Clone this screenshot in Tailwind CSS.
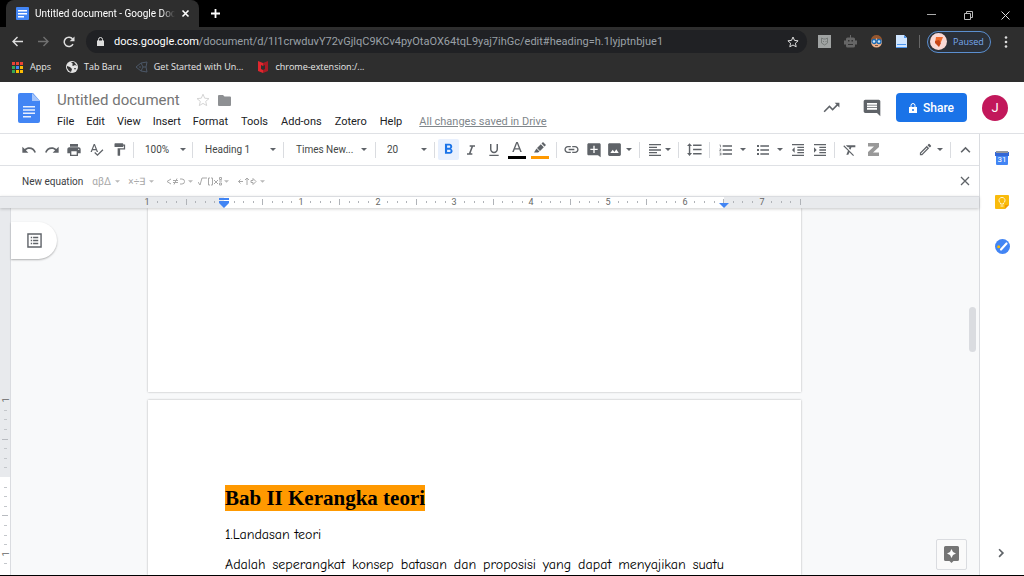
<!DOCTYPE html>
<html lang="en">
<head>
    <meta charset="UTF-8">
    <title>Untitled document - Google Docs</title>
    <meta name="viewport" content="width=device-width, initial-scale=1.0">
    <script src="https://cdn.jsdelivr.net/npm/@tailwindcss/browser@4"></script>
</head>
<body class="h-screen overflow-hidden flex flex-col bg-white text-[#3c4043] font-[Roboto,sans-serif] border-b border-black">

    <!-- Shared icons -->
    <svg class="hidden">
        <symbol id="caret" viewBox="0 0 8 4"><path d="M0 0h8L4 4z"/></symbol>
        <symbol id="docs" viewBox="0 0 22 30">
            <path fill="#4285f4" d="M2 0h13l7 8v20a2 2 0 0 1-2 2H2a2 2 0 0 1-2-2V2a2 2 0 0 1 2-2z"/>
            <path fill="#a6c5fa" d="M14 0l8 8h-8z"/>
            <path fill="#e8f0fe" d="M5 13h12v1.500H5zm0 3.300h12v1.500H5zm0 3.300h12v1.500H5zm0 3.300h8v1.500H5z"/>
        </symbol>
    </svg>

    <!-- Tab strip -->
    <header class="bg-black h-[27px] shrink-0 flex items-end text-white">
        <div class="w-[193px] h-[27px] ml-[6px] bg-[#2e2e2e] rounded-t-lg flex items-center pl-[10px] pr-[9px]">
            <svg class="size-[13px] shrink-0" viewBox="0 0 13 13"><path fill="#4285f4" d="M1 0h11a1 1 0 0 1 1 1v11a1 1 0 0 1-1 1H1a1 1 0 0 1-1-1V1a1 1 0 0 1 1-1z"/><path fill="#fff" d="M2 3h9v1.500H2zm0 3h9v1.500H2zm0 3h6v1.500H2z"/></svg>
            <div class="w-[140px] ml-[6px] overflow-hidden whitespace-nowrap text-[10px] mask-r-from-90%">Untitled document - Google Doc</div>
            <button class="ml-auto" aria-label="Close tab"><svg class="size-[9px] stroke-white" viewBox="0 0 9 9" stroke-width="1.600"><path d="M1.500 1.500l6 6m0-6l-6 6"/></svg></button>
        </div>
        <button class="ml-[11px] h-[27px]" aria-label="New tab"><svg class="size-[11px] stroke-white" viewBox="0 0 11 11" stroke-width="1.800"><path d="M5.500 1v9M1 5.500h9"/></svg></button>
        <div class="ml-auto h-[23px] flex items-center gap-7 pr-[14px]">
            <button aria-label="Minimize"><svg class="size-[9px] stroke-[#aaa]" viewBox="0 0 9 9"><path d="M0 3.500h9"/></svg></button>
            <button aria-label="Restore"><svg class="size-[9px] stroke-[#bbb]" viewBox="0 0 9 9" fill="none"><path d="M.5 2.500h6v6h-6zM2.500 2.500v-2h6v6h-2"/></svg></button>
            <button aria-label="Close"><svg class="size-[9px] stroke-[#ddd]" viewBox="0 0 9 9"><path d="M.5.5l8 8m0-8l-8 8"/></svg></button>
        </div>
    </header>

    <!-- Address bar -->
    <div class="bg-[#2e2e2e] h-[29px] shrink-0 flex items-center pl-3">
        <button aria-label="Back"><svg class="size-[11px] stroke-[#dedede]" viewBox="0 0 11 11" fill="none" stroke-width="1.400"><path d="M11 5.500H1M5.500 1L1 5.500 5.500 10"/></svg></button>
        <button class="ml-[15px]" aria-label="Forward"><svg class="size-[11px] stroke-[#707070]" viewBox="0 0 11 11" fill="none" stroke-width="1.400"><path d="M0 5.500h10M5.500 1L10 5.500 5.500 10"/></svg></button>
        <button class="ml-[14px]" aria-label="Reload"><svg class="size-[12px] stroke-[#dedede] fill-none" viewBox="0 0 12 12" stroke-width="1.500"><path d="M10 8.200A4.700 4.700 0 1 1 9.600 3"/><path class="fill-[#dedede]" stroke="none" d="M11.500.5v4.800H6.700z"/></svg></button>
        <div class="ml-[11px] flex-1 h-[23px] rounded-full bg-[#202124] flex items-center pl-[11px] pr-[8px]">
            <svg class="w-[7px] h-[9px] shrink-0" viewBox="0 0 7 9"><path fill="#ddd" d="M0 3.500h7V9H0z"/><path d="M1.500 4V2.500a2 2 0 0 1 4 0V4" fill="none" stroke="#ddd"/></svg>
            <div class="ml-[10px] text-[11px] leading-[23px] whitespace-nowrap text-[#9aa0a6]"><span class="text-white">docs.google.com</span>/document/d/1I1crwduvY72vGjlqC9KCv4pyOtaOX64tqL9yaj7ihGc/edit#heading=h.1lyjptnbjue1</div>
            <button class="ml-auto" aria-label="Bookmark this page"><svg class="size-[12px] fill-none stroke-[#ddd]" viewBox="0 0 12 12"><path d="M6 1l1.500 3.400 3.600.4-2.700 2.400.8 3.600L6 9l-3.200 1.800.8-3.600L.9 4.800l3.600-.4z"/></svg></button>
        </div>
        <div class="flex items-center gap-[13px] ml-[11px]">
            <svg class="size-[13px]" viewBox="0 0 13 13"><path fill="#a0a3a2" d="M0 0h13v13H0z"/><path fill="none" stroke="#777b79" d="M3.500 3v5l3 2 3-2V3l-2 1h-2zM5 6.500h1M7.500 6.500h1"/></svg>
            <svg class="size-[13px]" viewBox="0 0 13 13"><path fill="#666" d="M6 0h1v2.500h2.500A1.500 1.500 0 0 1 11 4v1.500h2v4h-2V11a1.500 1.500 0 0 1-1.500 1.500h-6A1.500 1.500 0 0 1 2 11V9.500H0v-4h2V4a1.500 1.500 0 0 1 1.500-1.500H6z"/><path fill="#333" d="M4 5h1.500v1.500H4zm3.500 0H9v1.500H7.500zM4 9h5v1H4z"/></svg>
            <svg class="size-[13px]" viewBox="0 0 13 13"><circle cx="6.500" cy="7" r="5.500" fill="#efb28b"/><path fill="#96572f" d="M1 5a5.500 5 0 0 1 11 0H8L6.500 3 5 5z"/><g fill="#cce6f8" stroke="#1769b5" stroke-width="1.300"><circle cx="4" cy="6.500" r="2"/><circle cx="9" cy="6.500" r="2"/></g><path stroke="#754" d="M5 10.500h3"/></svg>
            <svg class="w-[11px] h-[13px]" viewBox="0 0 11 13"><path fill="#cfe5ff" d="M0 0h8l3 3v10H0z"/><path fill="#4a94ee" d="M8 0l3 3H8zM1 9h9v1H1zM0 12h11v1H0z"/></svg>
        </div>
        <div class="w-px h-[13px] bg-[#666] ml-[12px]"></div>
        <button class="ml-[7px] h-[22px] w-[64px] rounded-full border border-[#5b8fd0] bg-[#2b3038] flex items-center pl-[2px] text-[9px] text-[#78a9ee] font-['Open_Sans',sans-serif]">
            <svg class="size-[17px]" viewBox="0 0 17 17"><circle cx="8.500" cy="8.500" r="8.500" fill="#f9d8d5"/><path fill="#ef6a2d" d="M6 4h7l-2 5-6 1z"/><path fill="#c64315" d="M5 8l4-1 2 3-2 4-4-4z"/></svg>
            <span class="ml-[6px]">Paused</span>
        </button>
        <button class="ml-[13px] mr-[16px]" aria-label="Menu"><svg class="w-[4px] h-[12px] fill-[#ddd]" viewBox="0 0 4 12"><circle cx="2" cy="1.500" r="1.300"/><circle cx="2" cy="6" r="1.300"/><circle cx="2" cy="10.500" r="1.300"/></svg></button>
    </div>

    <!-- Bookmarks -->
    <nav class="bg-[#2e2e2e] h-[26px] shrink-0 flex items-center pl-3 pb-[4px] text-[9px] text-[#e8e8e8] whitespace-nowrap font-['Open_Sans',sans-serif]">
        <a href="#" class="flex items-center gap-[7px]">
            <svg class="size-[11px]" viewBox="0 0 11 11"><path fill="#ea4335" d="M0 0h3v3H0zm4 0h3v3H4zm4 0h3v3H8z"/><path fill="#34a853" d="M0 4h3v3H0zm0 4h3v3H0z"/><path fill="#4285f4" d="M4 4h3v3H4z"/><path fill="#fbbc04" d="M8 4h3v3H8zM4 8h3v3H4zm4 0h3v3H8z"/></svg>
            Apps</a>
        <a href="#" class="flex items-center gap-[6px] ml-[15px]">
            <svg class="size-[12px]" viewBox="0 0 12 12"><circle cx="6" cy="6" r="6" fill="#e3e3e3"/><path fill="#333" d="M1 5l3 1 2 2-1 3-2-1-2-3zM5 1l3 0 3 4-2-1-2 1-1-1 1-1zM8 7h2l-1 2z"/></svg>
            Tab Baru</a>
        <a href="#" class="flex items-center gap-[6px] ml-[14px]">
            <svg class="size-[12px]" viewBox="0 0 12 12" fill="none" stroke="#4c5868"><path d="M0 6l5-4 6-1-1 5 1 5-6-1zM5 2l2 4-2 4M7 6h3M3 6h2"/></svg>
            Get Started with Un...</a>
        <a href="#" class="flex items-center gap-[6px] ml-[14px]">
            <svg class="size-[12px]" viewBox="0 0 12 12"><path fill="#e0272e" d="M1 0l5 2v3L4 4v4l2 1v3l-5-2z"/><path fill="#a81b24" d="M11 0L6 2v3l2-1v4L6 9v3l5-2z"/></svg>
            chrome-extension:/...</a>
    </nav>

    <!-- Docs header -->
    <div class="h-[52px] shrink-0 border-b border-[#dfe1e5] flex">
        <a href="#" aria-label="Docs home" class="ml-[18px] mt-[11px]"><svg class="w-[22px] h-[30px]"><use href="#docs"/></svg></a>
        <div class="ml-[17px] pt-2">
            <div class="flex items-center h-5">
                <h1 class="text-[15px] text-[#757575]">Untitled document</h1>
                <button class="ml-[16px]" aria-label="Star"><svg class="size-[14px] fill-none stroke-[#d5d5d5]" viewBox="0 0 14 14"><path d="M7 1.200l1.700 4 4.300.4-3.300 2.800 1 4.200L7 10.400l-3.700 2.200 1-4.200L1 5.600l4.300-.4z"/></svg></button>
                <button class="ml-[8px]" aria-label="Move"><svg class="w-[13px] h-[11px] fill-[#8e9093]" viewBox="0 0 13 11"><path d="M1 0h4l1.500 1.500H12a1 1 0 0 1 1 1V10a1 1 0 0 1-1 1H1a1 1 0 0 1-1-1V1a1 1 0 0 1 1-1z"/></svg></button>
            </div>
            <nav class="flex items-center gap-[12px] h-6 text-[11px] text-[#202124] whitespace-nowrap">
                <button>File</button><button>Edit</button><button>View</button><button>Insert</button><button>Format</button><button class="px-px">Tools</button><button>Add-ons</button><button class="px-px">Zotero</button><button>Help</button>
                <a href="#" class="ml-[5px] text-[#80868b] underline">All changes saved in Drive</a>
            </nav>
        </div>
        <div class="ml-auto flex items-center pr-4">
            <button aria-label="Activity"><svg class="size-[19px] fill-[#5f6368]" viewBox="0 0 24 24"><path d="M16 6l2.290 2.290-4.880 4.880-4-4L2 16.590 3.410 18l6-6 4 4 6.300-6.290L22 12V6z"/></svg></button>
            <button class="ml-[21px]" aria-label="Comments"><svg class="size-[20px] fill-[#5f6368]" viewBox="0 0 24 24"><path d="M21.990 4c0-1.100-.89-2-1.990-2H4c-1.100 0-2 .9-2 2v12c0 1.100.9 2 2 2h14l4 4-.01-18zM18 14H6v-2h12v2zm0-3H6V9h12v2zm0-3H6V6h12v2z"/></svg></button>
            <button class="ml-[14px] w-[71px] h-[29px] rounded bg-[#1a73e8] text-white text-[12px] font-medium flex items-center justify-center gap-[6px]">
                <svg class="w-[8px] h-[10px]" viewBox="0 0 8 10"><path fill="#fff" d="M0 4h8v6H0z"/><path fill="none" stroke="#fff" d="M2 4V2.500a2 2 0 0 1 4 0V4"/><circle cx="4" cy="7" r="1" fill="#1a73e8"/></svg>
                Share</button>
            <button class="ml-[15px] size-[26px] rounded-full bg-[#c2185b] text-white text-[13px]">J</button>
        </div>
    </div>

    <div class="flex-1 min-h-0 flex">
        <div class="flex-1 min-w-0 flex flex-col border-r border-[#dadce0]">

            <!-- Toolbar -->
            <div class="h-[32px] shrink-0 border-b border-[#dfe1e5] flex items-center pl-[17px] text-[10px] text-[#444746] fill-[#5f6368] [&_button]:flex [&_button]:items-center [&_button]:justify-center">
                <button class="w-[23px]" aria-label="Undo"><svg class="size-[16px]" viewBox="0 0 24 24"><path d="M12.500 8c-2.650 0-5.050.99-6.900 2.600L2 7v9h9l-3.620-3.620c1.390-1.160 3.160-1.880 5.120-1.880 3.540 0 6.550 2.310 7.600 5.500l2.370-.78C21.080 11.030 17.150 8 12.500 8z"/></svg></button>
                <button class="w-[23px]" aria-label="Redo"><svg class="size-[16px]" viewBox="0 0 24 24"><path d="M18.400 10.600C16.550 8.990 14.150 8 11.500 8c-4.650 0-8.580 3.030-9.960 7.220L3.900 16c1.050-3.190 4.050-5.500 7.600-5.500 1.950 0 3.730.72 5.120 1.880L13 16h9V7l-3.600 3.600z"/></svg></button>
                <button class="w-[22px]" aria-label="Print"><svg class="size-[16px]" viewBox="0 0 24 24"><path d="M19 8H5c-1.660 0-3 1.340-3 3v6h4v4h12v-4h4v-6c0-1.660-1.340-3-3-3zm-3 11H8v-5h8v5zm3-7c-.55 0-1-.45-1-1s.45-1 1-1 1 .45 1 1-.45 1-1 1zm-1-9H6v4h12V3z"/></svg></button>
                <button class="w-[23px]" aria-label="Spelling"><svg class="size-[15px]" viewBox="0 0 24 24"><path d="M12.450 16h2.090L9.430 3H7.570L2.460 16h2.090l1.120-3h5.640l1.140 3zm-6.020-5L8.500 5.480 10.570 11H6.430zm15.160.59l-8.090 8.090L9.830 16l-1.410 1.410 5.090 5.090L23 13l-1.410-1.410z"/></svg></button>
                <button class="w-[22px]" aria-label="Paint format"><svg class="size-[15px]" viewBox="0 0 24 24"><path d="M18 4V3c0-.55-.45-1-1-1H5c-.55 0-1 .45-1 1v4c0 .55.45 1 1 1h12c.55 0 1-.45 1-1V6h1v4H9v11c0 .55.45 1 1 1h2c.55 0 1-.45 1-1v-9h8V4h-3z"/></svg></button>
                <div class="w-px h-4 bg-[#dadce0] ml-[3px] mr-px"></div>
                <button class="w-[56px] pl-[10px] pr-[5px]"><span class="mr-auto">100%</span><svg class="w-[6px] h-[3px]"><use href="#caret"/></svg></button>
                <div class="w-px h-4 bg-[#dadce0] mx-px"></div>
                <button class="w-[88px] pl-[11px] pr-[6px]"><span class="mr-auto">Heading 1</span><svg class="w-[6px] h-[3px]"><use href="#caret"/></svg></button>
                <div class="w-px h-4 bg-[#dadce0] mx-px"></div>
                <button class="w-[89px] pl-[11px] pr-[7px]"><span class="mr-auto">Times New...</span><svg class="w-[6px] h-[3px]"><use href="#caret"/></svg></button>
                <div class="w-px h-4 bg-[#dadce0] mx-px"></div>
                <button class="w-[56px] pl-[10px] pr-[6px]"><span class="mr-auto">20</span><svg class="w-[6px] h-[3px]"><use href="#caret"/></svg></button>
                <div class="w-px h-4 bg-[#dadce0] mx-px"></div>

                <div class="flex items-center pl-[2px] pr-[3px]">
                    <button class="w-[21px] h-[21px] rounded-xs bg-[#e8f0fe] fill-[#1a73e8]" aria-label="Bold"><svg class="size-[17px]" viewBox="0 0 24 24"><path d="M15.600 10.790c.97-.67 1.650-1.770 1.650-2.790 0-2.260-1.750-4-4-4H7v14h7.040c2.090 0 3.710-1.700 3.710-3.790 0-1.520-.86-2.820-2.150-3.420zM10 6.500h3c.83 0 1.500.67 1.500 1.500s-.67 1.500-1.500 1.500h-3v-3zm3.500 9H10v-3h3.500c.83 0 1.500.67 1.500 1.500s-.67 1.500-1.500 1.500z"/></svg></button>
                    <button class="w-[23px]" aria-label="Italic"><svg class="size-[16px]" viewBox="0 0 24 24"><path d="M10 5v2.200h2.600l-3.700 9.600H6V19h8v-2.200h-2.600l3.700-9.600H18V5z"/></svg></button>
                    <button class="w-[23px]" aria-label="Underline"><svg class="size-[16px]" viewBox="0 0 24 24"><path d="M12 17c3.310 0 6-2.690 6-6V3h-2.200v8c0 2.100-1.700 3.800-3.800 3.800S8.200 13.100 8.200 11V3H6v8c0 3.310 2.690 6 6 6zm-7 2v2h14v-2H5z"/></svg></button>
                    <button class="w-[23px]" aria-label="Text color"><svg class="w-[18px] h-[18px]" viewBox="0 0 18 18"><path d="M8.200 1h1.600l4 10H12.200l-.9-2.500H6.700L5.800 11H4.200zM7.200 7.200h3.600L9 2.500z"/><path fill="#000" d="M0 15h18v3H0z"/></svg></button>
                    <button class="w-[24px]" aria-label="Highlight color"><svg class="w-[18px] h-[18px]" viewBox="0 0 18 18"><path d="M12 1l3 3-1.500 1.500-3-3zM9.800 3.200l3 3L9 10 6 7zM5.500 7.500l3 3-1.500 1H3z"/><path fill="#ff9900" d="M0 15h18v3H0z"/></svg></button>
                </div>
                <div class="w-px h-4 bg-[#dadce0] mx-px"></div>

                <div class="flex items-center pl-[2px] pr-[6px]">
                    <button class="w-[23px]" aria-label="Insert link"><svg class="size-[17px]" viewBox="0 0 24 24"><path d="M3.900 12c0-1.710 1.390-3.100 3.100-3.100h4V7H7c-2.760 0-5 2.240-5 5s2.240 5 5 5h4v-1.900H7c-1.710 0-3.100-1.390-3.100-3.100zM8 13h8v-2H8v2zm9-6h-4v1.900h4c1.710 0 3.100 1.390 3.100 3.100s-1.390 3.100-3.100 3.100h-4V17h4c2.760 0 5-2.240 5-5s-2.240-5-5-5z"/></svg></button>
                    <button class="w-[22px]" aria-label="Add comment"><svg class="size-[16px]" viewBox="0 0 24 24"><path d="M22 4c0-1.100-.9-2-2-2H4c-1.100 0-2 .9-2 2v14c0 1.100.9 2 2 2h14l4 3zm-4.500 8H13v4.500h-2V12H6.500v-2H11V5.500h2V10h4.500z"/></svg></button>
                    <button class="w-[27px]" aria-label="Insert image"><svg class="size-[17px]" viewBox="0 0 24 24"><path d="M21 19V5c0-1.100-.9-2-2-2H5c-1.100 0-2 .9-2 2v14c0 1.100.9 2 2 2h14c1.100 0 2-.9 2-2zM6 17l3.500-4.500 2.500 3 2.500-4L18 17z"/></svg><svg class="w-[6px] h-[3px] ml-[3px]"><use href="#caret"/></svg></button>
                </div>
                <div class="w-px h-4 bg-[#dadce0] mx-px"></div>

                <button class="w-[36px]" aria-label="Align"><svg class="size-[16px]" viewBox="0 0 24 24"><path d="M15 15H3v2h12v-2zm0-8H3v2h12V7zM3 13h18v-2H3v2zm0 8h18v-2H3v2zM3 3v2h18V3H3z"/></svg><svg class="w-[6px] h-[3px] ml-[2px]"><use href="#caret"/></svg></button>
                <div class="w-px h-4 bg-[#dadce0] mx-px"></div>
                <button class="w-[28px]" aria-label="Line spacing"><svg class="size-[17px]" viewBox="0 0 24 24"><path d="M6 7h2.500L5 3 1.500 7H4v10H1.500L5 21l3.500-4H6V7zm4-2v2h12V5H10zm0 14h12v-2H10v2zm0-6h12v-2H10v2z"/></svg></button>
                <div class="w-px h-4 bg-[#dadce0] mx-px"></div>

                <div class="flex items-center pl-[2px] pr-[2px]">
                    <button class="w-[37px] gap-[6px]" aria-label="Numbered list"><svg class="size-[16px]" viewBox="0 0 24 24"><path d="M2 17h2v.5H3v1h1v.5H2v1h3v-4H2v1zm1-9h1V4H2v1h1v3zm-1 3h1.800L2 13.100v.9h3v-1H3.200L5 10.900V10H2v1zm5-6v2h14V5H7zm0 14h14v-2H7v2zm0-6h14v-2H7v2z"/></svg><svg class="w-[6px] h-[3px]"><use href="#caret"/></svg></button>
                    <button class="w-[37px] gap-[6px]" aria-label="Bulleted list"><svg class="size-[16px]" viewBox="0 0 24 24"><path d="M3 4.500h3v3H3zm0 6h3v3H3zm0 6h3v3H3zM8 19h13v-2H8v2zm0-6h13v-2H8v2zm0-8v2h13V5H8z"/></svg><svg class="w-[6px] h-[3px]"><use href="#caret"/></svg></button>
                    <button class="w-[22px]" aria-label="Decrease indent"><svg class="size-[16px]" viewBox="0 0 24 24"><path d="M11 17h10v-2H11v2zm-8-5l4 4V8l-4 4zm0 9h18v-2H3v2zM3 3v2h18V3H3zm8 6h10V7H11v2zm0 4h10v-2H11v2z"/></svg></button>
                    <button class="w-[22px]" aria-label="Increase indent"><svg class="size-[16px]" viewBox="0 0 24 24"><path d="M3 21h18v-2H3v2zM3 8v8l4-4-4-4zm8 9h10v-2H11v2zM3 3v2h18V3H3zm8 6h10V7H11v2zm0 4h10v-2H11v2z"/></svg></button>
                </div>
                <div class="w-px h-4 bg-[#dadce0] mx-px"></div>
                <button class="w-[28px]" aria-label="Clear formatting"><svg class="size-[16px]" viewBox="0 0 24 24"><path d="M3.270 5L2 6.270l6.970 6.970L6.500 19h3l1.570-3.660L16.730 21 18 19.730 3.550 5.270 3.270 5zM6 5v.18L8.820 8h2.400l-.72 1.680 2.100 2.100L14.210 8H20V5H6z"/></svg></button>
                <button class="w-[18px]" aria-label="Zotero"><svg class="w-[11px] h-[13px]" viewBox="0 0 11 13"><path fill="#999" d="M0 0h11v4L5 9.500h6V13H0V9l6-5.500H0z"/></svg></button>

                <button class="ml-auto w-[30px] gap-[4px]" aria-label="Editing mode"><svg class="size-[15px]" viewBox="0 0 24 24"><path d="M3 17.250V21h3.750L17.810 9.940l-3.750-3.750L3 17.250zM6 19H5v-1l9-9 1 1zM20.710 7.040a1 1 0 0 0 0-1.410l-2.340-2.340a1 1 0 0 0-1.410 0l-1.830 1.830 3.750 3.750z"/></svg><svg class="w-[6px] h-[3px]"><use href="#caret"/></svg></button>
                <div class="w-px h-4 bg-[#dadce0] ml-[5px]"></div>
                <button class="w-[28px]" aria-label="Hide menus"><svg class="size-[17px]" viewBox="0 0 24 24"><path d="M12 8l-7 7 1.600 1.600L12 11.200l5.400 5.400L19 15z"/></svg></button>
            </div>

            <!-- Equation toolbar -->
            <div class="h-[30px] shrink-0 flex items-center pl-[22px] pr-[9px] text-[10px] text-[#a8a8a8] fill-[#b8b8b8] whitespace-nowrap">
                <button class="text-[#3c4043] mr-[9px]">New equation</button>
                <button class="w-[36px] flex items-center gap-[4px]">αβΔ<svg class="w-[5px] h-[3px]"><use href="#caret"/></svg></button>
                <button class="w-[38px] flex items-center gap-[4px]">×÷∃<svg class="w-[5px] h-[3px]"><use href="#caret"/></svg></button>
                <button class="w-[32px] flex items-center gap-[3px]"><svg class="w-[19px] h-[9px] fill-none stroke-[#a8a8a8]" viewBox="0 0 19 9"><path d="M5 2L1 4.500 5 7M7 3.500h5M7 5.500h5M11 1.500L8 7.500M14 2h2a2 2 0 0 1 0 5h-2"/></svg><svg class="w-[5px] h-[3px]"><use href="#caret"/></svg></button>
                <button class="w-[40px] flex items-center gap-[2px]"><svg class="w-[24px] h-[11px] fill-none stroke-[#a8a8a8]" viewBox="0 0 24 11"><path d="M0 6l2 3 2-7h5M12 2h-1.500v7H12M13 2h1.500v7H13M16 4l4 4m0-4l-4 4M21.500 1.500h2v2h-2zM21.500 7h2v2h-2zM21 5h3"/></svg><svg class="w-[5px] h-[3px]"><use href="#caret"/></svg></button>
                <button class="flex items-center gap-[3px]"><svg class="w-[19px] h-[9px] fill-none stroke-[#a8a8a8]" viewBox="0 0 19 9"><path d="M5 4.500H.5M2.500 2.500l-2 2 2 2M9 8V1M7 3l2-2 2 2M13 3.500h2v-2l3 3-3 3v-2h-2z"/></svg><svg class="w-[5px] h-[3px]"><use href="#caret"/></svg></button>
                <button class="ml-auto" aria-label="Close equation toolbar"><svg class="size-[10px] stroke-[#5f6368]" viewBox="0 0 10 10" stroke-width="1.300"><path d="M1 1l8 8m0-8L1 9"/></svg></button>
            </div>

            <!-- Horizontal ruler -->
            <div class="relative z-10 h-[12px] shrink-0 bg-[#e8eaed] border-t border-[#dadce0] shadow-[0_1px_3px_rgba(0,0,0,0.2)]">
                <svg id="regla-h" class="w-full h-[11px] block"></svg>
            </div>

            <!-- Document area -->
            <main class="flex-1 min-h-0 flex relative bg-[#f8f9fa]">
                <div class="w-[11px] shrink-0 bg-[#e8eaed] border-r border-[#dadce0]">
                    <svg id="regla-v" class="w-full h-full block"></svg>
                </div>
                <div class="flex-1 min-w-0 flex flex-col gap-2 pl-[137px] overflow-hidden">
                    <section class="w-[653px] h-[184px] shrink-0 bg-white shadow-[0_0_2px_rgba(0,0,0,0.3)]"></section>
                    <section class="w-[653px] flex-1 bg-white shadow-[0_0_2px_rgba(0,0,0,0.3)] px-[77px] pt-[85px] text-black">
                        <h2 class="text-[21px] leading-[26px] font-bold font-['Liberation_Serif',serif]"><span class="bg-[#ff9900] inline-block">Bab II Kerangka teori</span></h2>
                        <p class="mt-[14px] text-[14px] leading-5 font-['Comic_Sans_MS','Comic_Neue',Lato,sans-serif]">1.Landasan teori</p>
                        <p class="mt-[10px] w-[499px] text-[14px] leading-5 text-justify [text-align-last:justify] font-['Comic_Sans_MS','Comic_Neue',Lato,sans-serif]">Adalah seperangkat konsep batasan dan proposisi yang dapat menyajikan suatu</p>
                    </section>
                </div>

                <!-- Outline, scrollbar and explore sit over the page -->
                <button class="absolute left-[11px] top-[14px] w-[46px] h-[37px] bg-white rounded-r-full shadow-[0_1px_2px_rgba(0,0,0,0.3)] pl-[16px]" aria-label="Show outline">
                    <svg class="size-[15px]" viewBox="0 0 16 16"><path fill="none" stroke="#5f6368" stroke-width="1.500" d="M1 1h14v14H1z"/><path fill="#5f6368" d="M4 4h1.500v1.500H4zm2.500 0H12v1.500H6.500zM4 7.250h1.500v1.500H4zm2.500 0H12v1.500H6.500zM4 10.500h1.500V12H4zm2.500 0H12V12H6.500z"/></svg>
                </button>
                <div class="absolute right-[3px] top-[99px] w-[7px] h-[45px] rounded-full bg-[#dadce0]"></div>
                <button class="absolute right-3 bottom-[5px] size-[31px] rounded-xs bg-[#fafafa] border border-[#dadce0] flex items-center justify-center" aria-label="Explore">
                    <svg class="w-[15px] h-[17px]" viewBox="0 0 15 17"><path fill="#757575" d="M1.500 0h12A1.500 1.500 0 0 1 15 1.500v12a1.500 1.500 0 0 1-1.500 1.500H9.500l-2 2-2-2h-4A1.500 1.500 0 0 1 0 13.500v-12A1.500 1.500 0 0 1 1.500 0z"/><path fill="#fff" d="M7.500 3L9 6l3 1.500L9 9l-1.500 3L6 9 3 7.500 6 6z"/></svg>
                </button>
            </main>
        </div>

        <!-- Side panel -->
        <aside class="w-[44px] shrink-0 flex flex-col items-center pt-[17px] pb-[15px]">
            <button aria-label="Calendar"><svg class="size-[14px]" viewBox="0 0 14 14"><path fill="#4285f4" d="M1 2h12v11a1 1 0 0 1-1 1H2a1 1 0 0 1-1-1z"/><path fill="#3367d6" d="M0 1h14v4H0z"/><path fill="#94989e" d="M1 0h12v2H1z"/><text x="7" y="11" font-size="8" text-anchor="middle" fill="#fff">31</text></svg></button>
            <button class="mt-[30px]" aria-label="Keep"><svg class="size-[14px]" viewBox="0 0 14 14"><path fill="#f9bb0b" d="M1 0h12a1 1 0 0 1 1 1v9l-4 4H1a1 1 0 0 1-1-1V1a1 1 0 0 1 1-1z"/><path fill="#fff" d="M14 10v4h-4z"/><path fill="#f29900" d="M10 10h4l-4 4z"/><path fill="none" stroke="#fff3cf" d="M5.500 9V8a3 3 0 1 1 3 0v1zM5.500 11h3"/></svg></button>
            <button class="mt-[30px]" aria-label="Tasks"><svg class="size-[15px]" viewBox="0 0 15 15"><circle cx="7.500" cy="7.500" r="7.500" fill="#4285f4"/><path stroke="#fff" stroke-width="2.200" stroke-linecap="round" d="M6 10.500l5.500-6"/><circle cx="3.700" cy="7.700" r="1.500" fill="#fbbc04"/></svg></button>
            <button class="mt-auto" aria-label="Hide side panel"><svg class="size-[14px] fill-[#5f6368]" viewBox="0 0 24 24"><path d="M8 4.500L6 6.500l5.500 5.500L6 17.500l2 2 7.500-7.500z"/></svg></button>
        </aside>
    </div>

    <script>
        const PULGADA = 76.8;
        const OCTAVO = PULGADA / 8;

        // Regla horizontal: el cero queda en el margen izquierdo
        const ceroH = 224;
        let h = `<rect x="${ceroH}" y="0" width="500" height="11" fill="#fff"/>`;
        for (let i = -8; i <= 60; i++) {
            const x = ceroH + i * OCTAVO;
            if (i === 0) continue;
            if (i % 8 === 0) {
                h += `<text x="${Math.round(x)}" y="8" font-size="9" text-anchor="middle" fill="#666">${Math.abs(i / 8)}</text>`;
            } else if (i % 4 === 0) {
                h += `<rect x="${Math.round(x)}" y="2" width="1" height="6" fill="#b0b3b8"/>`;
            } else {
                h += `<rect x="${Math.round(x)}" y="4" width="1" height="2" fill="#b0b3b8"/>`;
            }
        }
        h += `<path fill="#4285f4" d="M219 1h10v2h-10zM219 4h10v2l-5 5-5-5z"/><path fill="#4285f4" d="M719 6h10l-5 5z"/>`;
        document.getElementById('regla-h').innerHTML = h;

        // Regla vertical, hasta donde llega la ventana
        const alto = window.innerHeight - 209;
        const ceroV = 269;
        let v = `<rect x="0" y="${ceroV}" width="10" height="${alto}" fill="#fff"/>`;
        for (let i = -8; ceroV + i * OCTAVO < alto - 4; i++) {
            const y = Math.round(ceroV + i * OCTAVO);
            if (i === 0) continue;
            if (i % 8 === 0) {
                v += `<text transform="translate(9 ${y}) rotate(-90)" font-size="9" text-anchor="middle" fill="#666">${Math.abs(i / 8)}</text>`;
            } else if (i % 4 === 0) {
                v += `<rect x="2" y="${y}" width="6" height="1" fill="#b8bbc0"/>`;
            } else {
                v += `<rect x="4" y="${y}" width="3" height="1" fill="#c4c7cb"/>`;
            }
        }
        document.getElementById('regla-v').innerHTML = v;
    </script>

</body>
</html>
